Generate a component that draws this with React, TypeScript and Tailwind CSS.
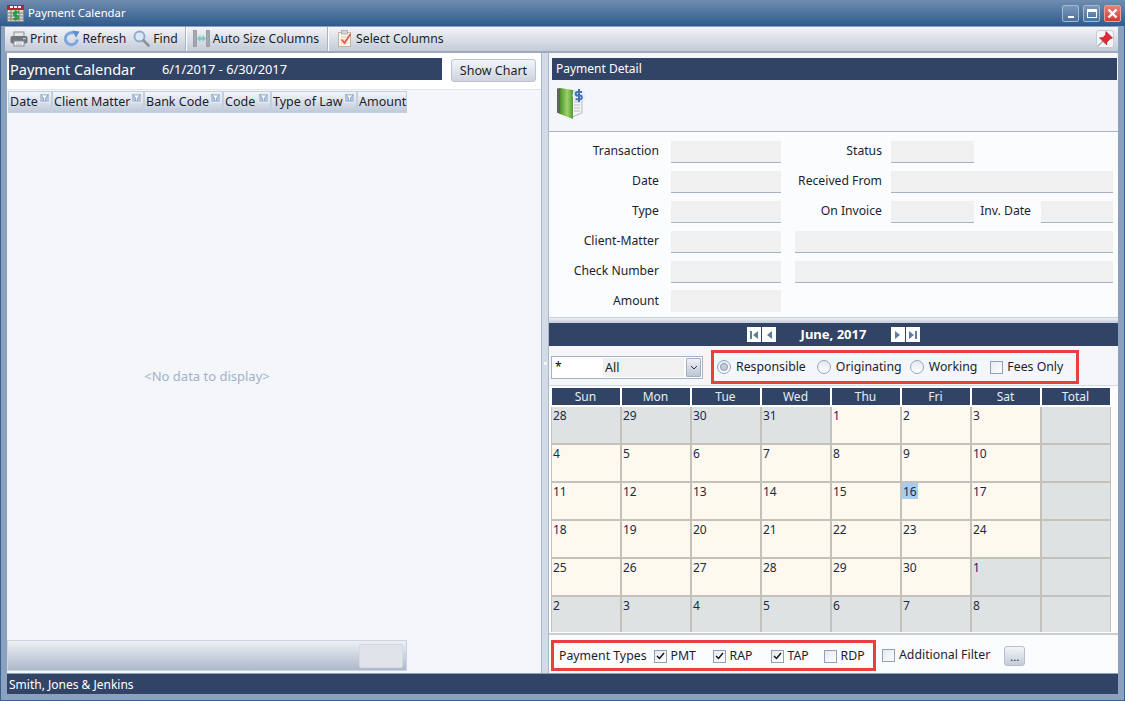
import React from 'react';

const FONT = '"Noto Sans", "DejaVu Sans", sans-serif';

const Printer = () => (
  <svg width="18" height="16" viewBox="0 0 18 16">
    <rect x="4" y="1" width="10" height="5" fill="#e4e6e8" stroke="#8a8f96" />
    <rect x="0.5" y="5" width="17" height="7.5" rx="2" fill="#71767d" />
    <rect x="4" y="10" width="10" height="5" fill="#f6f6f6" stroke="#878c93" />
    <path d="M6 12h6M6 13.5h6" stroke="#b9bcc1" strokeWidth="0.8" />
    <rect x="13" y="7" width="2.5" height="1.2" fill="#d8dde2" />
  </svg>
);

const RefreshIcon = () => (
  <svg width="17" height="17" viewBox="0 0 17 17">
    <path d="M14.3 9.5a6 6 0 1 1-3.6-6.3" fill="none" stroke="#7ba6de" strokeWidth="3" />
    <path d="M9 0.5l7.5 1-3.4 6.2z" fill="#5f8fd3" />
  </svg>
);

const FindIcon = () => (
  <svg width="17" height="17" viewBox="0 0 17 17">
    <circle cx="6.5" cy="6.5" r="5" fill="#dbe7f5" stroke="#8fa9cc" strokeWidth="1.8" />
    <path d="M10.5 10.5l5 5" stroke="#8b929c" strokeWidth="2.8" strokeLinecap="round" />
  </svg>
);

const AutoSizeIcon = () => (
  <svg width="17" height="17" viewBox="0 0 17 17">
    <rect x="0.5" y="0.5" width="3" height="16" fill="#a2a8b0" stroke="#80868e" strokeWidth="0.6" />
    <rect x="13.5" y="0.5" width="3" height="16" fill="#a2a8b0" stroke="#80868e" strokeWidth="0.6" />
    <path d="M5 8.5h7" stroke="#79cbc6" strokeWidth="2.4" />
    <path d="M4 8.5l3.4-3.6v7.2zM13 8.5l-3.4-3.6v7.2z" fill="#79cbc6" />
  </svg>
);

const ClipboardIcon = () => (
  <svg width="16" height="17" viewBox="0 0 16 17">
    <rect x="1.5" y="2.5" width="12" height="14" fill="#faf3e8" stroke="#c4b49f" />
    <rect x="4.5" y="0.5" width="6" height="3.5" fill="#d4d6db" stroke="#9a9ea5" strokeWidth="0.7" />
    <path d="M4 7h7M4 10h7M4 13h7" stroke="#e4c6bc" strokeWidth="1" />
    <path d="M4.5 9.5l3 3.5 6-9" fill="none" stroke="#e0604f" strokeWidth="1.8" />
  </svg>
);

const PinIcon = () => (
  <svg width="16" height="16" viewBox="0 0 16 16">
    <path d="M0.5 15.5l5.5-5.5" stroke="#a5a5a5" strokeWidth="1.3" />
    <path d="M9 0.5l6.5 6.5-2.6 1-3 3.2-.2 2.8-7.2-7.2 2.8-.2 3.2-3z" fill="#e22a36" stroke="#a9121c" strokeWidth="0.6" />
    <path d="M8.5 3.5l-3 3" stroke="#f59aa0" strokeWidth="1" />
  </svg>
);

const CalendarLogo = () => (
  <svg width="17" height="17" viewBox="0 0 17 17">
    <rect x="0.5" y="0.5" width="16" height="16" fill="#d8d8d0" stroke="#777" strokeWidth="0.5" />
    <rect x="0" y="0" width="17" height="5" fill="#b3262b" />
    <rect x="3" y="1" width="3" height="2" fill="#fff" />
    <rect x="7" y="1" width="3" height="2" fill="#fff" />
    <rect x="11" y="1" width="3" height="2" fill="#fff" />
    <path d="M1 8h15M1 11h15M1 14h15M4 5v11M8 5v11M12 5v11" stroke="#6c6c66" strokeWidth="0.8" />
    <path d="M12 7H8.5a1.7 1.7 0 0 0 0 3.6h1a1.7 1.7 0 0 1 0 3.4H6M9 5.5v10" fill="none" stroke="#1e9a3c" strokeWidth="1.6" />
  </svg>
);

const BookIcon = () => (
  <svg width="30" height="32" viewBox="0 0 30 32">
    <defs>
      <linearGradient id="cover" x1="0" y1="0" x2="1" y2="0">
        <stop offset="0" stopColor="#4f8f2e" />
        <stop offset="0.55" stopColor="#9ed26a" />
        <stop offset="1" stopColor="#4f9a32" />
      </linearGradient>
    </defs>
    <path d="M16 4h10v22l-10 4z" fill="#f4f4f4" stroke="#9aa0a0" strokeWidth="0.7" />
    <path d="M18 12h6M18 15h6M18 18h6M18 21h6M18 24h6" stroke="#a9a9a9" strokeWidth="0.8" />
    <path d="M4 1l13 2v29L4 27z" fill="url(#cover)" />
    <path d="M1 1.5l3-.5v26l-3-1.5z" fill="#5d665a" />
    <circle cx="23" cy="8.5" r="6.5" fill="#e6edf7" />
    <path d="M26 5h-4.5a1.8 1.8 0 0 0 0 3.6h2.5a1.8 1.8 0 0 1 0 3.6H19.5M23 2v13" fill="none" stroke="#4472b4" strokeWidth="2" />
  </svg>
);

const FilterIcon = () => (
  <span className="absolute right-[1px] top-[1px] flex h-[10px] w-[11px] items-center justify-center border border-[#e6ebf2] bg-[#b5c3d8]">
    <svg width="7" height="6" viewBox="0 0 7 6">
      <path d="M0 0h7L4.4 3v3H2.6V3z" fill="#fff" stroke="#5f86b8" strokeWidth="0.6" />
    </svg>
  </span>
);

const ToolButton = ({ icon, label, className = '' }: { icon: React.ReactNode; label: string; className?: string }) => (
  <div className={`flex items-center text-[12.2px] text-[#1a1f2b] ${className}`}>
    {icon}
    <span>{label}</span>
  </div>
);

const Separator = ({ className = '' }: { className?: string }) => (
  <div className={`mr-[3px] h-[24px] w-[2px] border-l border-r border-l-[#aab3c3] border-r-white ${className}`} />
);

const WinButton = ({ children, red = false }: { children: React.ReactNode; red?: boolean }) => (
  <div
    className={`flex h-[17px] w-[17px] items-center justify-center rounded-[2px] border ${
      red ? 'border-[#e9a09a] bg-gradient-to-b from-[#e8807a] to-[#cf3a33]' : 'border-[#a5b8d0] bg-gradient-to-b from-[#7a97b9] to-[#4c719d]'
    }`}
  >
    {children}
  </div>
);

const columns = [
  { label: 'Date', width: 'w-[44px]', filter: true },
  { label: 'Client Matter', width: 'w-[92px]', filter: true },
  { label: 'Bank Code', width: 'w-[79px]', filter: true },
  { label: 'Code', width: 'w-[48px]', filter: true },
  { label: 'Type of Law', width: 'w-[86px]', filter: true },
  { label: 'Amount', width: 'w-[50px]', filter: false },
];

const Label = ({ children, className = '' }: { children: React.ReactNode; className?: string }) => (
  <span className={`pb-[2px] text-right text-[12.2px] text-[#1a1f2b] ${className}`}>{children}</span>
);

const Field = ({ className = '', line = true }: { className?: string; line?: boolean }) => (
  <div className={`h-[22px] bg-[#f0f0f0] ${line ? 'border-b border-b-[#a9b2c2]' : ''} ${className}`} />
);

const days = ['Sun', 'Mon', 'Tue', 'Wed', 'Thu', 'Fri', 'Sat', 'Total'];

const weeks = [
  [28, 29, 30, 31, 1, 2, 3],
  [4, 5, 6, 7, 8, 9, 10],
  [11, 12, 13, 14, 15, 16, 17],
  [18, 19, 20, 21, 22, 23, 24],
  [25, 26, 27, 28, 29, 30, 1],
  [2, 3, 4, 5, 6, 7, 8],
];

const isCurrent = (week: number, day: number) => {
  if (week === 0) return day >= 4;
  if (week === 4) return day <= 5;
  if (week === 5) return false;
  return true;
};

const Radio = ({ checked = false }: { checked?: boolean }) => (
  <span className="flex h-[14px] w-[14px] items-center justify-center rounded-full border border-[#94a6bf] bg-gradient-to-b from-[#e4e8ee] to-white">
    {checked && <span className="h-[8px] w-[8px] rounded-full border border-[#8a9ab2] bg-[#c3ccd9]" />}
  </span>
);

const Check = ({ checked = false }: { checked?: boolean }) => (
  <span className="flex h-[13px] w-[13px] shrink-0 items-center justify-center border border-[#8fa2bd] bg-gradient-to-br from-[#e6e9ee] to-white">
    {checked && (
      <svg width="9" height="8" viewBox="0 0 9 8">
        <path d="M1 4l2.5 2.5L8 1" fill="none" stroke="#111" strokeWidth="1.4" />
      </svg>
    )}
  </span>
);

const NavButton = ({ d }: { d: string }) => (
  <span className="flex h-[15px] w-[14px] items-center justify-center bg-white">
    <svg width="10" height="10" viewBox="0 0 10 10">
      <path d={d} fill="#5e7ca3" />
    </svg>
  </span>
);

export default function App() {
  return (
    <div
      className="flex h-[701px] w-[1125px] flex-col overflow-hidden bg-[#8ba2bf] shadow-[inset_0_0_0_1px_#3b6090]"
      style={{ fontFamily: FONT }}
    >
      {/* title bar */}
      <div className="flex h-[26px] shrink-0 items-center justify-between bg-gradient-to-b from-[#6f8db0] to-[#2f5a8c] pl-[7px] pr-[4px]">
        <div className="flex items-center gap-[4px]">
          <CalendarLogo />
          <span className="text-[11.3px] text-white">Payment Calendar</span>
        </div>
        <div className="flex gap-[4px]">
          <WinButton>
            <span className="mt-[8px] h-[2px] w-[6px] bg-white" />
          </WinButton>
          <WinButton>
            <span className="h-[9px] w-[10px] border border-t-[3px] border-white" />
          </WinButton>
          <WinButton red>
            <svg width="11" height="11" viewBox="0 0 11 11">
              <path d="M1.5 1.5l8 8M9.5 1.5l-8 8" stroke="#fff" strokeWidth="2.4" />
            </svg>
          </WinButton>
        </div>
      </div>

      <div className="flex min-h-0 flex-1 flex-col pl-[5px] pr-[7px] pb-[7px]">
        {/* toolbar */}
        <div className="flex h-[27px] shrink-0 items-center border-t border-t-[#8ba2bf] border-b-2 border-b-[#9caabd] bg-gradient-to-b from-[#f2f4f7] to-[#c4cbd8] pl-[5px] pr-[4px]">
          <ToolButton icon={<Printer />} label="Print" className="gap-[2px]" />
          <ToolButton icon={<RefreshIcon />} label="Refresh" className="ml-[6px] gap-[2px]" />
          <ToolButton icon={<FindIcon />} label="Find" className="ml-[7px] gap-[3px]" />
          <Separator className="ml-[7px]" />
          <ToolButton icon={<AutoSizeIcon />} label="Auto Size Columns" className="ml-[3px] gap-[3px]" />
          <Separator className="ml-[8px]" />
          <ToolButton icon={<ClipboardIcon />} label="Select Columns" className="ml-[5px] gap-[3px]" />
          <div className="ml-auto flex h-[18px] w-[18px] items-center justify-center rounded-[3px] border border-[#c6ccd6] bg-[#f4f5f7]">
            <PinIcon />
          </div>
        </div>

        {/* main */}
        <div className="ml-[2px] flex min-h-0 flex-1">
          {/* left panel */}
          <div className="flex w-[534px] shrink-0 flex-col bg-[#f4f6f9]">
            <div className="flex h-[36px] shrink-0 items-start gap-[9px] bg-white pl-[2px] pr-[5px] pt-[5px]">
              <div className="flex h-[22px] w-[433px] items-center bg-[#324465] pl-[1px] pt-[1px] text-white">
                <span className="w-[152px] text-[14.5px]">Payment Calendar</span>
                <span className="text-[12.8px]">6/1/2017 - 6/30/2017</span>
              </div>
              <div className="mt-[1px] flex h-[23px] w-[85px] items-center justify-center rounded-[3px] border border-[#b8c3d3] bg-gradient-to-b from-[#f3f5f8] to-[#cdd4df] pt-[1px] text-[12.5px] text-[#1a1f2b]">
                Show Chart
              </div>
            </div>
            <div className="flex h-[24px] shrink-0 border-t border-t-[#dfe4ea] pl-[1px] pt-[1px]">
              {columns.map((c) => (
                <div
                  key={c.label}
                  className={`relative flex h-[22px] items-center border border-[#c2cfe0] bg-gradient-to-b from-[#f4f6f9] to-[#bfc9d9] pl-[1px] pt-[1px] text-[12.5px] text-[#1a1f2b] ${c.width}`}
                >
                  {c.label}
                  {c.filter && <FilterIcon />}
                </div>
              ))}
            </div>
            <div className="flex w-[400px] flex-1 items-center justify-center text-[13px] text-[#9fb2cb]">
              &lt;No data to display&gt;
            </div>
            <div className="mb-[2px] flex h-[31px] w-[400px] shrink-0 items-center justify-end border border-[#c9d5e4] bg-gradient-to-b from-[#eef0f4] to-[#aeb9cb] pr-[3px]">
              <div className="h-[24px] w-[44px] rounded-[2px] border border-[#d3dae4] bg-[#dfe3ea]" />
            </div>
          </div>

          {/* splitter */}
          <div className="flex w-[8px] shrink-0 items-center justify-center border-x border-x-[#a9b7c9] bg-[#d3dbe6]">
            <span className="h-[3px] w-[3px] bg-[#f4f6f9]" />
          </div>

          {/* right panel */}
          <div className="flex min-w-0 flex-1 flex-col bg-[#f4f6f9]">
            <div className="shrink-0 pt-[5px]">
              <div className="ml-[3px] mr-[1px] flex h-[22px] items-center bg-[#324465] pl-[4px] text-[12px] text-white">
                Payment Detail
              </div>
            </div>
            <div className="flex h-[52px] shrink-0 items-start border-b border-b-[#aeb4bd] pl-[7px] pt-[7px]">
              <BookIcon />
            </div>

            <div className="grid shrink-0 grid-cols-[110px_122px_14px_87px_9px_83px_57px_10px_72px] grid-rows-[repeat(6,30px)] content-start items-center bg-[#fbfcfe] pt-[5px]">
              <Label>Transaction</Label>
              <Field className="col-start-2 ml-[12px]" />
              <Label className="col-start-4">Status</Label>
              <Field className="col-start-6" />

              <Label className="col-start-1">Date</Label>
              <Field className="col-start-2 ml-[12px]" />
              <Label className="col-start-3 col-end-5 whitespace-nowrap">Received From</Label>
              <Field className="col-start-6 col-end-10" />

              <Label className="col-start-1">Type</Label>
              <Field className="col-start-2 ml-[12px]" />
              <Label className="col-start-4">On Invoice</Label>
              <Field className="col-start-6" />
              <Label className="col-start-7">Inv. Date</Label>
              <Field className="col-start-9" />

              <Label className="col-start-1">Client-Matter</Label>
              <Field className="col-start-2 ml-[12px]" />
              <Field className="col-start-4 col-end-10" />

              <Label className="col-start-1">Check Number</Label>
              <Field className="col-start-2 ml-[12px]" />
              <Field className="col-start-4 col-end-10" />

              <Label className="col-start-1">Amount</Label>
              <Field className="col-start-2 ml-[12px] mb-[3px] h-[19px]" line={false} />
            </div>
            <div className="h-[6px] shrink-0 border-y border-y-[#c7d0dc] bg-gradient-to-b from-[#eef1f5] to-[#c9d1dd]" />

            {/* calendar */}
            <div className="flex h-[23px] shrink-0 items-center justify-center bg-[#324465]">
              <div className="flex gap-[1px]"><NavButton d="M1 1h2v8H1zM9 1v8L4 5z" /><NavButton d="M8 1v8L3 5z" /></div>
              <span className="mx-[25px] text-[13px] font-bold text-white">June, 2017</span>
              <div className="flex gap-[1px]"><NavButton d="M2 1v8l5-4z" /><NavButton d="M1 1v8l5-4zM7 1h2v8H7z" /></div>
            </div>

            <div className="flex h-[40px] shrink-0 items-center border-b border-b-[#d7dbe1] pl-[2px] pt-[3px]">
              <div className="flex h-[23px] w-[152px] items-center border border-[#a3b3c9] bg-white pl-[3px] pr-[1px]">
                <span className="w-[48px] text-[12px]">*</span>
                <span className="flex h-[19px] w-[81px] items-center bg-[#f0f0f0] pl-[2px] pt-[2px] text-[12.5px] text-[#1a1f2b]">All</span>
                <span className="ml-[2px] flex h-[19px] w-[15px] items-center justify-center rounded-[1px] border border-[#9fb0c7] bg-gradient-to-b from-[#eef1f5] to-[#bcc6d6]">
                  <svg width="8" height="5" viewBox="0 0 8 5"><path d="M1 1l3 3 3-3" fill="none" stroke="#333" strokeWidth="1" /></svg>
                </span>
              </div>
              <div className="ml-[8px] flex h-[34px] w-[368px] items-center border-[3px] border-[#e84040] pl-[3px] text-[12.3px] text-[#1a1f2b]">
                <Radio checked />
                <span className="ml-[5px]">Responsible</span>
                <span className="ml-[11px]"><Radio /></span>
                <span className="ml-[5px]">Originating</span>
                <span className="ml-[8px]"><Radio /></span>
                <span className="ml-[5px]">Working</span>
                <span className="ml-[13px]"><Check /></span>
                <span className="ml-[4px]">Fees Only</span>
              </div>
            </div>

            <div className="min-h-0 flex-1 bg-white pl-[2px]">
              <div className="grid w-[560px] grid-cols-[repeat(8,70px)]">
                {days.map((d) => (
                  <div
                    key={d}
                    className="mt-[2px] mb-[2px] flex h-[17px] items-center justify-center border-x border-x-white bg-[#324465] pr-[1px] text-[12px] text-[#e6ecf4]"
                  >
                    {d}
                  </div>
                ))}
                {weeks.map((week, w) =>
                  [...week, null].map((day, i) => (
                    <div
                      key={`${w}-${i}`}
                      className={`border-x border-x-[#c4c0ba] text-[12px] text-[#1a2a48] ${
                        w === 5 ? 'h-[35px]' : 'h-[38px] border-b-2 border-b-[#c4c0ba]'
                      } ${day !== null && isCurrent(w, i) ? 'bg-[#fef9ee]' : 'bg-[#dfe2e3]'}`}
                    >
                      {day !== null && (
                        <span className={`inline-block h-[16px] px-[1px] leading-[18px] ${w === 2 && i === 5 ? 'bg-[#a8cdf2]' : ''}`}>{day}</span>
                      )}
                    </div>
                  ))
                )}
              </div>
            </div>

            <div className="flex h-[40px] shrink-0 items-center border-t-2 border-t-[#c9ccd0] bg-[#fbfcfe] pl-[2px] pt-[3px] text-[12.3px] text-[#1a1f2b]">
              <div className="flex h-[31px] w-[325px] items-center border-[3px] border-[#e84040] pl-[5px] pt-[1px]">
                <span className="mr-[7px] whitespace-nowrap">Payment Types</span>
                <Check checked />
                <span className="ml-[4px] w-[42px]">PMT</span>
                <Check checked />
                <span className="ml-[4px] w-[41px]">RAP</span>
                <Check checked />
                <span className="ml-[4px] w-[36px]">TAP</span>
                <Check />
                <span className="ml-[4px]">RDP</span>
              </div>
              <span className="ml-[6px]"><Check /></span>
              <span className="ml-[4px]">Additional Filter</span>
              <div className="ml-[14px] flex h-[20px] w-[21px] items-end justify-center rounded-[3px] border border-[#b3bfd0] bg-gradient-to-b from-[#f3f5f8] to-[#c3ccda] text-[11px] leading-[16px]">...</div>
            </div>
          </div>
        </div>

        {/* status bar */}
        <div className="ml-[2px] mt-[1px] flex h-[20px] shrink-0 items-center bg-[#324465] pl-[2px] pt-[1px] text-[12px] text-white">
          Smith, Jones &amp; Jenkins
        </div>
      </div>
    </div>
  );
}
